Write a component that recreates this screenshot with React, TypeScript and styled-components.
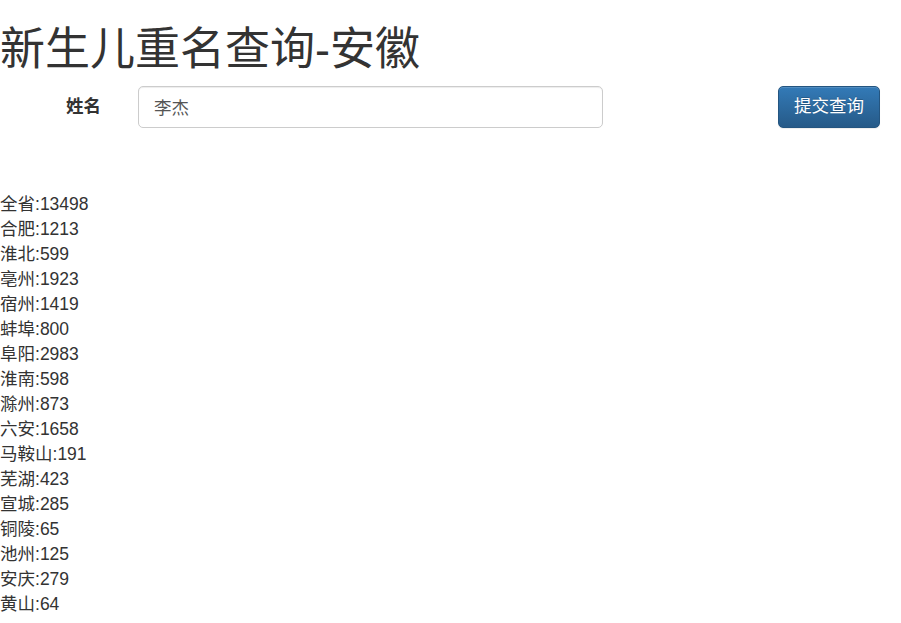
import styled, { createGlobalStyle } from "styled-components";

const counts: { city: string; total: number }[] = [
  { city: "全省", total: 13498 },
  { city: "合肥", total: 1213 },
  { city: "淮北", total: 599 },
  { city: "亳州", total: 1923 },
  { city: "宿州", total: 1419 },
  { city: "蚌埠", total: 800 },
  { city: "阜阳", total: 2983 },
  { city: "淮南", total: 598 },
  { city: "滁州", total: 873 },
  { city: "六安", total: 1658 },
  { city: "马鞍山", total: 191 },
  { city: "芜湖", total: 423 },
  { city: "宣城", total: 285 },
  { city: "铜陵", total: 65 },
  { city: "池州", total: 125 },
  { city: "安庆", total: 279 },
  { city: "黄山", total: 64 },
];

export default function App() {
  return (
    <>
      <GlobalStyle />
      <Page>
        <Title>新生儿重名查询-安徽</Title>
        <SearchForm onSubmit={(e) => e.preventDefault()}>
          <Label htmlFor="name">姓名</Label>
          <InputCol>
            <NameInput id="name" defaultValue="李杰" />
          </InputCol>
          <SubmitButton type="submit">提交查询</SubmitButton>
        </SearchForm>
        <ResultList>
          {counts.map((c) => (
            <ResultRow key={c.city}>
              {c.city}:{c.total}
            </ResultRow>
          ))}
        </ResultList>
      </Page>
    </>
  );
}

const GlobalStyle = createGlobalStyle`
  * {
    box-sizing: border-box;
  }

  body {
    margin: 0;
    background: #fff;
    color: #333;
    font-family: "Liberation Sans", "Noto Sans CJK SC", sans-serif;
    font-size: 17.5px;
    line-height: 25px;
  }
`;

const Page = styled.div`
  width: 901px;
`;

const Title = styled.h1`
  margin: 25px 0 11px;
  font-size: 45px;
  font-weight: 400;
  line-height: 1.1;
  color: #333;
`;

const SearchForm = styled.form`
  display: grid;
  grid-template-columns: 120px 501px 1fr;
  align-items: center;
  height: 42px;
  margin-bottom: 64px;
`;

const Label = styled.label`
  padding-right: 19px;
  text-align: right;
  font-weight: 700;
`;

const InputCol = styled.div`
  padding: 0 18px;
`;

const NameInput = styled.input`
  display: block;
  width: 100%;
  height: 42px;
  padding: 7px 15px;
  border: 1px solid #ccc;
  border-radius: 5px;
  box-shadow: inset 0 1px 1px rgba(0, 0, 0, 0.075);
  color: #555;
  font: inherit;
  outline: none;
`;

const SubmitButton = styled.button`
  justify-self: end;
  margin-right: 21px;
  width: 102px;
  height: 42px;
  padding: 0;
  border: 1px solid #245580;
  border-radius: 5px;
  background: linear-gradient(to bottom, #337ab7 0%, #265a88 100%);
  box-shadow: inset 0 1px 0 rgba(255, 255, 255, 0.15), 0 1px 1px rgba(0, 0, 0, 0.075);
  color: #fff;
  font: inherit;
  text-shadow: 0 -1px 0 rgba(0, 0, 0, 0.2);
  cursor: pointer;
`;

const ResultList = styled.div`
  display: flex;
  flex-direction: column;
`;

const ResultRow = styled.div`
  height: 25px;
`;
